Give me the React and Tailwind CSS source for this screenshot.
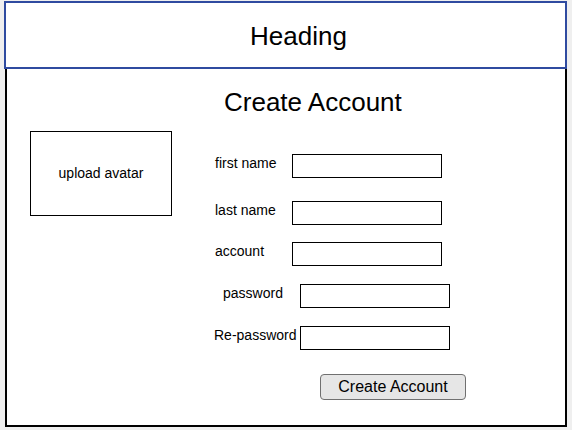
import React from 'react';

const rows = [
  { label: 'first name', mt: 'mt-[37px]', pl: 'pl-[1px]', w: 'w-[77px]' },
  { label: 'last name', mt: 'mt-[23px]', pl: 'pl-[1px]', w: 'w-[77px]' },
  { label: 'account', mt: 'mt-[17px]', pl: 'pl-[1px]', w: 'w-[77px]' },
  { label: 'password', mt: 'mt-[18px]', pl: 'pl-[9px]', w: 'w-[77px]' },
  { label: 'Re-password', mt: 'mt-[18px]', pl: 'pl-0', w: 'w-[86px]' },
];

const App = () => {
  return (
    <div className="w-[572px] h-[430px] bg-[#efefef] pl-[4px] pr-[5px] pt-px font-['Liberation_Sans',Arial,sans-serif] text-black">
      {/* header */}
      <div className="h-[68px] bg-white border-2 border-[#2f4ba0] flex items-center justify-center pl-[26px]">
        <h1 className="text-[26px] leading-[30px] mt-px">Heading</h1>
      </div>

      {/* body */}
      <div className="h-[358px] bg-white border-2 border-t-0 border-black ml-px flex">
        <div className="w-[207px] shrink-0">
          <div className="ml-[23px] mt-[62px] w-[142px] h-[85px] border border-black flex items-center justify-center text-[14px]">
            upload avatar
          </div>
        </div>

        <div className="flex-1 flex flex-col items-start">
          <h2 className="mt-[18px] ml-[10px] text-[26px] leading-[30px]">Create Account</h2>

          {rows.map((r) => (
            <div key={r.label} className={`flex items-start h-[24px] ${r.mt} ${r.pl}`}>
              <span className={`${r.w} text-[14px] leading-4 mt-px`}>{r.label}</span>
              <input type="text" className="w-[150px] h-[24px] border border-black bg-white outline-none" />
            </div>
          ))}

          <button className="mt-[24px] ml-[106px] w-[146px] h-[26px] rounded-[4px] border border-[#707070] bg-[#e6e6e6] text-[16px] leading-5">
            Create Account
          </button>
        </div>
      </div>
    </div>
  );
};

export default App;
